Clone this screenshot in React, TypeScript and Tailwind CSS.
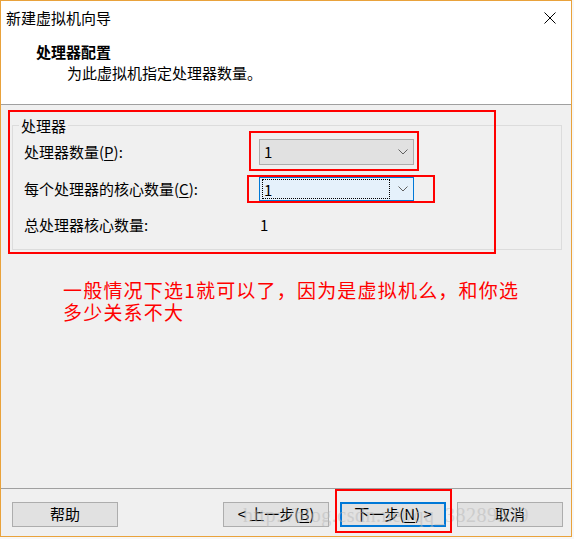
const ui = { fontFamily: '"Noto Sans CJK SC", "Noto Sans", sans-serif' }

function Chevron() {
  return (
    <svg width="10" height="6" viewBox="0 0 10 6" className="text-[#606060]">
      <path d="M0.5 0.5 L5 5 L9.5 0.5" fill="none" stroke="currentColor" strokeWidth="1" />
    </svg>
  )
}

function Button({ label, active }: { label: React.ReactNode; active?: boolean }) {
  return (
    <div
      className={
        "w-[106px] h-[25px] flex items-center justify-center text-[15px] text-black bg-[#e1e1e1] " +
        (active ? "border-2 border-[#0078d7]" : "border border-[#adadad]")
      }
    >
      {label}
    </div>
  )
}

export default function App() {
  return (
    <div className="relative w-[574px] h-[539px] bg-[#f7f7f7] overflow-hidden" style={ui}>
      <div className="w-[572px] h-[537px] border border-[#e9a23b] flex flex-col bg-[#f0f0f0]">
        {/* title + header */}
        <div className="bg-white h-[103px] border-b border-[#a0a0a0] box-content">
          <div className="flex items-center justify-between pl-[5px] pr-[15px] pt-[6px] h-[27px]">
            <span className="text-[15px] leading-[20px] text-black">新建虚拟机向导</span>
            <svg width="12" height="12" viewBox="0 0 12 12">
              <path d="M0.5 0.5 L11.5 11.5 M11.5 0.5 L0.5 11.5" stroke="#000" strokeWidth="1" />
            </svg>
          </div>
          <div className="pl-[35px] mt-[14px] text-[15px] leading-[20px] font-bold text-black">处理器配置</div>
          <div className="pl-[66px] mt-[1px] text-[15px] leading-[20px] text-black">为此虚拟机指定处理器数量。</div>
        </div>

        {/* body */}
        <div className="flex-1 flex flex-col">
          <div className="relative ml-[11px] mt-[20px] w-[550px] h-[125px] border border-[#dcdcdc] pl-[11px] pt-[13px]">
            <span className="absolute left-[6px] top-[-10px] px-[2px] bg-[#f0f0f0] text-[15px] leading-[20px] text-black">
              处理器
            </span>
            <div className="flex items-center h-[26px]">
              <span className="w-[235px] text-[15px] leading-[20px] text-black">
                处理器数量(<span className="underline underline-offset-2">P</span>):
              </span>
              <div className="w-[155px] h-[26px] bg-[#e1e1e1] border border-[#adadad] flex items-center justify-between pl-[4px] pr-[5px] text-[15px] text-black">
                <span>1</span>
                <Chevron />
              </div>
            </div>
            <div className="flex items-center h-[24px] mt-[12px]">
              <span className="w-[235px] text-[15px] leading-[20px] text-black">
                每个处理器的核心数量(<span className="underline underline-offset-2">C</span>):
              </span>
              <div className="w-[155px] h-[24px] bg-[#e5f1fb] border border-[#0078d7] flex items-center pl-[2px] pr-[5px] text-[15px] text-black">
                <div className="w-[128px] h-[20px] border border-dotted border-black flex items-center pl-[1px] leading-none">
                  1
                </div>
                <div className="flex-1 flex justify-end">
                  <Chevron />
                </div>
              </div>
            </div>
            <div className="flex items-center h-[20px] mt-[14px]">
              <span className="w-[236px] text-[15px] leading-[20px] text-black">总处理器核心数量:</span>
              <span className="text-[15px] leading-[20px] text-black">1</span>
            </div>
          </div>

          <p className="ml-[62px] mt-[29px] text-[19px] leading-[22px] tracking-[1.2px] text-[#ff0000] whitespace-nowrap">
            一般情况下选1就可以了，因为是虚拟机么，和你选
            <br />
            多少关系不大
          </p>
        </div>

        {/* footer */}
        <div className="h-[48px] border-t border-[#a0a0a0] pt-[13px] pl-[11px] flex gap-[105px]">
          <Button label="帮助" />
          <div className="flex gap-[11px]">
            <Button
              label={
                <span>
                  &lt; 上一步(<span className="underline underline-offset-2">B</span>)
                </span>
              }
            />
            <Button
              active
              label={
                <span>
                  下一步(<span className="underline underline-offset-2">N</span>) &gt;
                </span>
              }
            />
            <Button label="取消" />
          </div>
        </div>
      </div>

      {/* watermark */}
      <div
        className="pointer-events-none absolute left-[243px] top-[503px] text-[20px] leading-[24px] text-[#b8b8b8] opacity-50 tracking-[0.5px] whitespace-nowrap"
        style={{ fontFamily: '"Liberation Serif", serif' }}
      >
        http://blog.csdn.net/qq_38289539
      </div>

      {/* red annotation boxes */}
      <div className="absolute left-[8px] top-[110px] w-[488px] h-[144px] border-2 border-[#ff0000]" />
      <div className="absolute left-[249px] top-[131px] w-[170px] h-[40px] border-2 border-[#ff0000]" />
      <div className="absolute left-[247px] top-[175px] w-[188px] h-[28px] border-2 border-[#ff0000]" />
      <div className="absolute left-[335px] top-[489px] w-[117px] h-[44px] border-2 border-[#ff0000]" />
    </div>
  )
}
